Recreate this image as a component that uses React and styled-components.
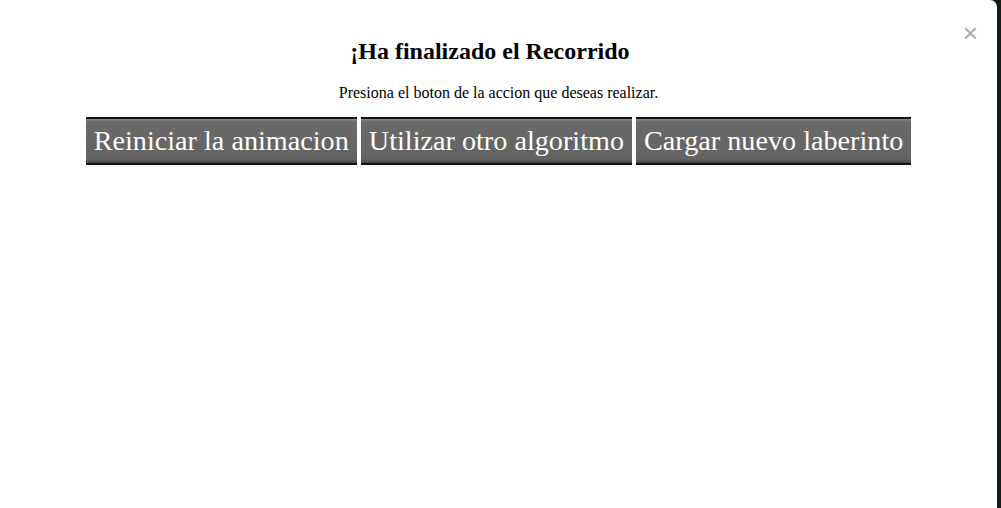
import React from 'react';
import styled, { createGlobalStyle } from 'styled-components';

const GlobalStyle = createGlobalStyle`
  html, body {
    margin: 0;
    padding: 0;
    background: #161b12;
    font-family: "Liberation Serif", "Times New Roman", serif;
  }
`;

const StyledOverlay = styled.div`
  width: 1001px;
  height: 508px;
  overflow: hidden;
`;

const StyledModal = styled.div`
  width: 997px;
  height: 508px;
  box-sizing: border-box;
  background: #ffffff;
  border-top-right-radius: 7px;
  padding: 20px 20px;
`;

const StyledClose = styled.span`
  float: right;
  color: #aaaaaa;
  font-family: "Liberation Sans", Arial, sans-serif;
  font-size: 26px;
  font-weight: normal;
  line-height: 1;
  margin: 0 -1px 0 3px;
  cursor: pointer;
`;

const StyledTitle = styled.h2`
  font-size: 24px;
  font-weight: bold;
  text-align: center;
  color: #000000;
  margin: 18px 0 0;
`;

const StyledText = styled.p`
  font-size: 16px;
  text-align: center;
  color: #000000;
  margin: 19px 0 15px;
`;

const StyledActions = styled.div`
  display: flex;
  justify-content: center;
  gap: 4px;
`;

const StyledButton = styled.button`
  font-family: "Liberation Serif", "Times New Roman", serif;
  font-size: 28.2px;
  color: #ffffff;
  height: 48px;
  padding: 0 8px;
  border: none;
  border-top: 2px solid #111111;
  border-bottom: 2px solid #111111;
  background: linear-gradient(
    #8a8a8a 0,
    #6a6a6a 3px,
    #636363 calc(100% - 4px),
    #454545 100%
  );
  cursor: pointer;
`;

const actions = ['Reiniciar la animacion', 'Utilizar otro algoritmo', 'Cargar nuevo laberinto'];

const App = () => {
  return (
    <>
      <GlobalStyle />
      <StyledOverlay>
        <StyledModal>
          <StyledClose>&times;</StyledClose>
          <StyledTitle>¡Ha finalizado el Recorrido</StyledTitle>
          <StyledText>Presiona el boton de la accion que deseas realizar.</StyledText>
          <StyledActions>
            {actions.map((label) => (
              <StyledButton key={label}>{label}</StyledButton>
            ))}
          </StyledActions>
        </StyledModal>
      </StyledOverlay>
    </>
  );
};

export default App;
